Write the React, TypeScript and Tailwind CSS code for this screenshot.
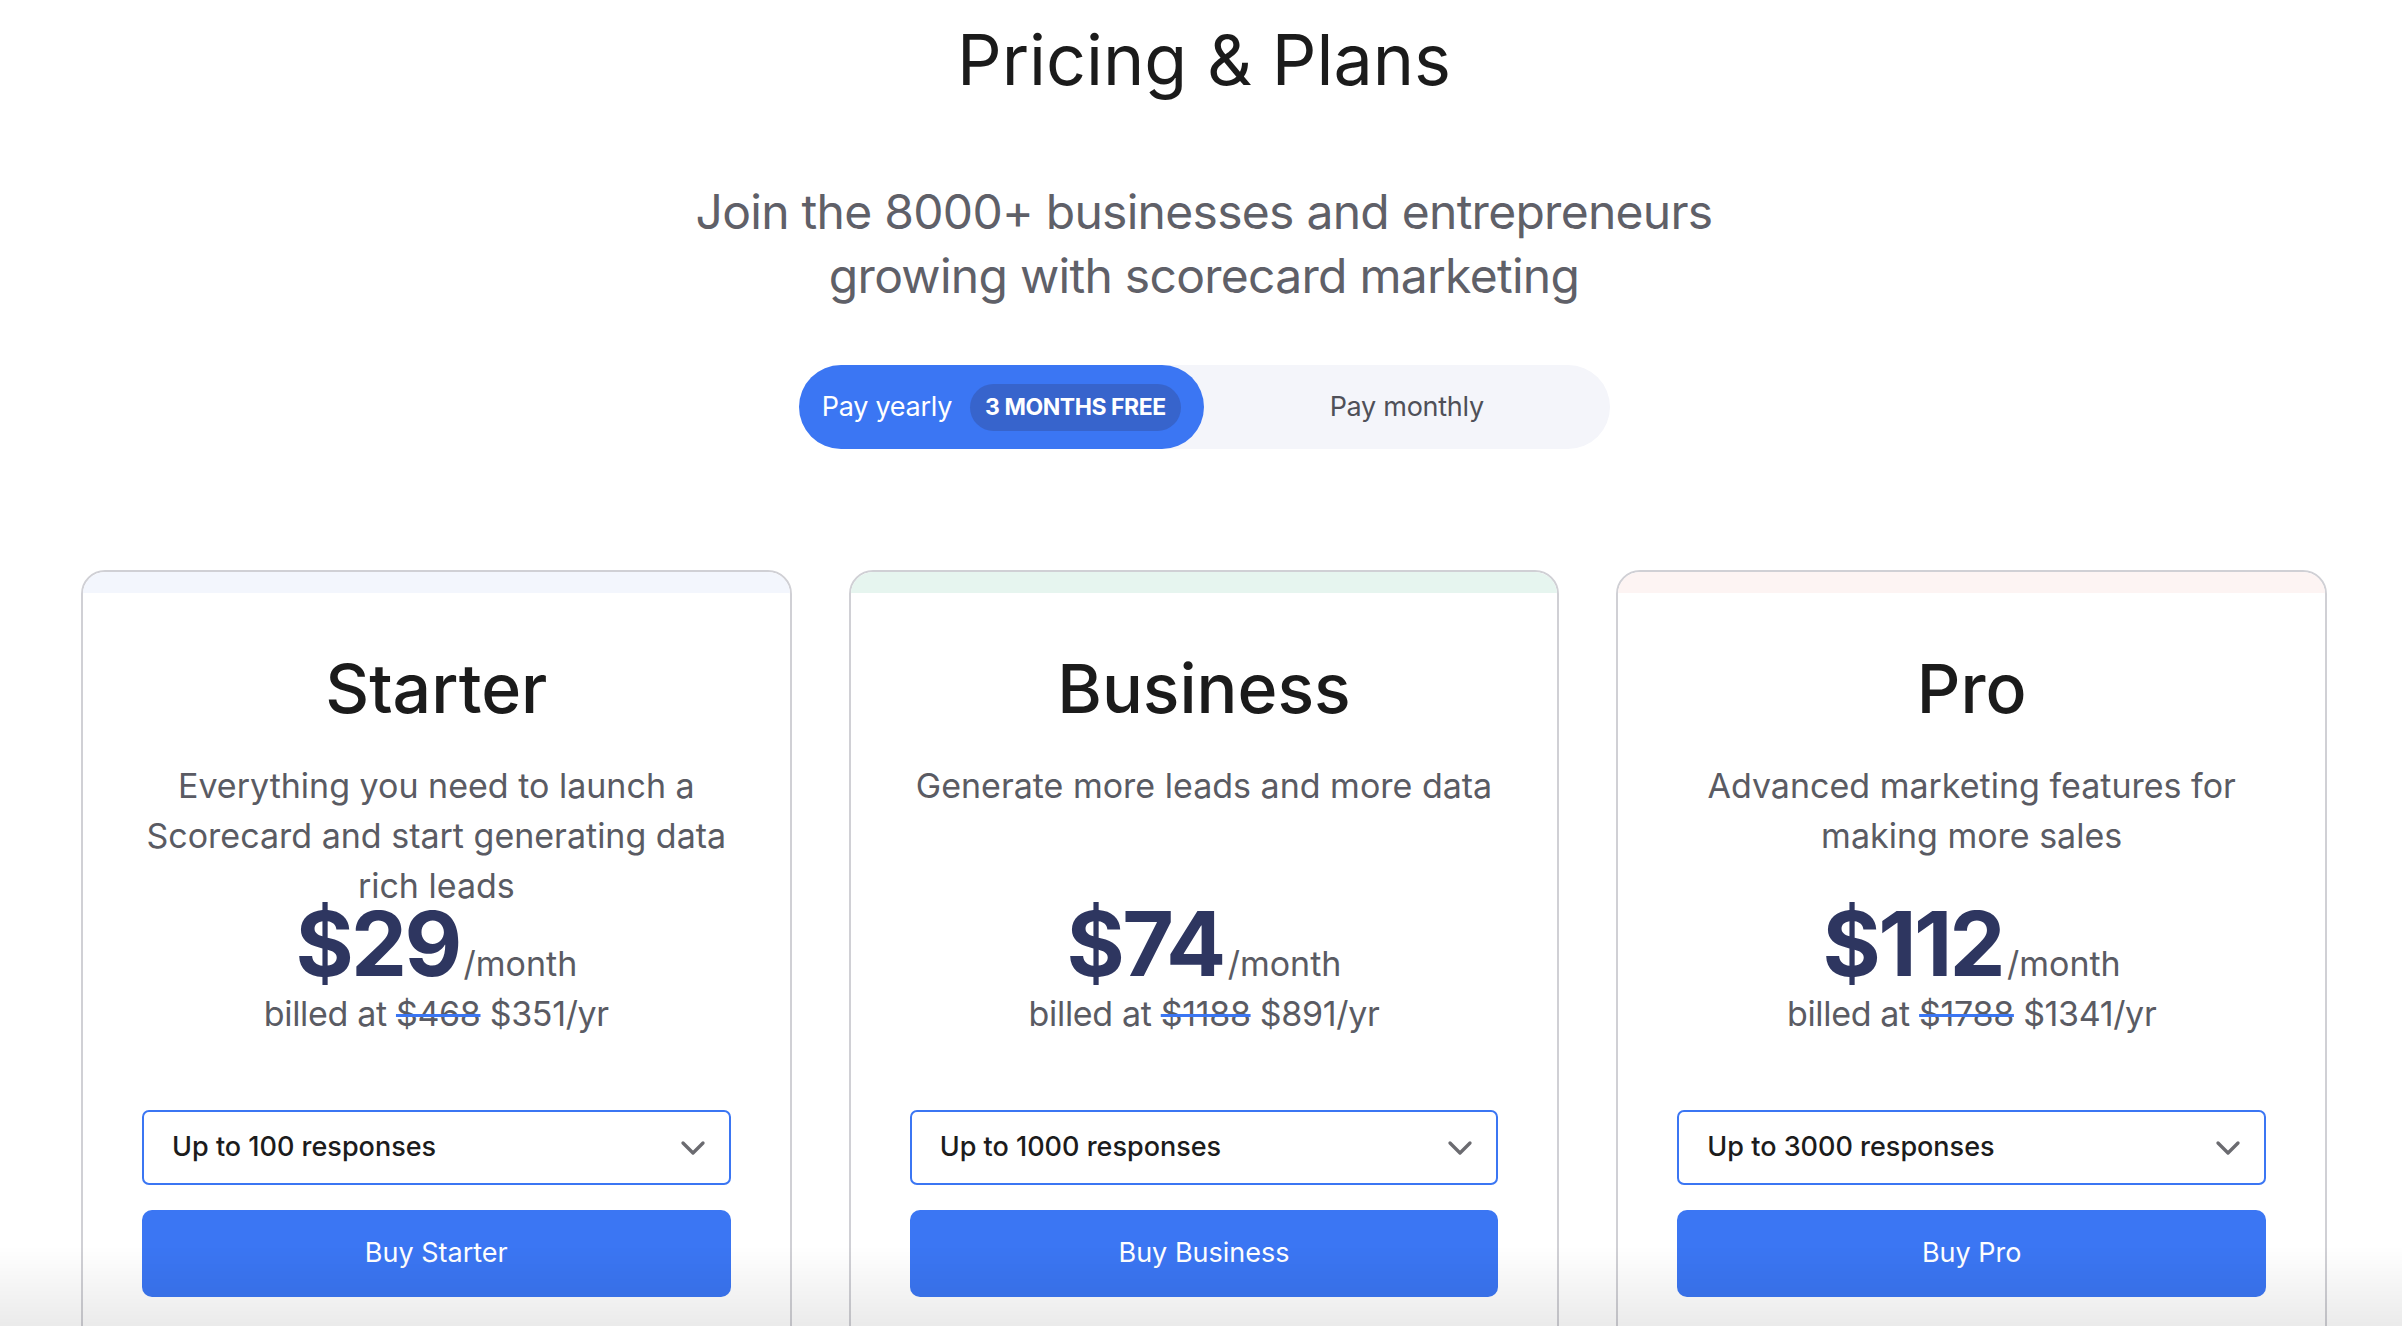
import { ChevronDown } from "lucide-react";

type Plan = {
  name: string;
  description: string;
  price: string;
  oldTotal: string;
  newTotal: string;
  responses: string;
  band: string;
};

const plans: Plan[] = [
  {
    name: "Starter",
    description: "Everything you need to launch a Scorecard and start generating data rich leads",
    price: "$29",
    oldTotal: "$468",
    newTotal: "$351/yr",
    responses: "Up to 100 responses",
    band: "bg-[#f3f6fd]",
  },
  {
    name: "Business",
    description: "Generate more leads and more data",
    price: "$74",
    oldTotal: "$1188",
    newTotal: "$891/yr",
    responses: "Up to 1000 responses",
    band: "bg-[#e6f5ef]",
  },
  {
    name: "Pro",
    description: "Advanced marketing features for making more sales",
    price: "$112",
    oldTotal: "$1788",
    newTotal: "$1341/yr",
    responses: "Up to 3000 responses",
    band: "bg-[#fdf4f3]",
  },
];

function PlanCard({ plan }: { plan: Plan }) {
  return (
    <div className="overflow-hidden rounded-[24px] border-2 border-[#d0d0d5] bg-white">
      <div className={`h-[21px] ${plan.band}`} />
      <div className="flex flex-col items-center px-[59px] pb-[120px] pt-[56px] text-center">
        <h2 className="text-[68px] font-medium leading-[79px] text-[#1b1b1b]">{plan.name}</h2>
        <p className="mt-[33px] h-[100px] text-[34px] leading-[50px] text-[#5a5b63]">
          {plan.description}
        </p>
        <div className="mt-[38px] flex items-baseline justify-center">
          <span className="text-[89px] font-bold leading-none tracking-[-0.03em] text-[#2e3660]">
            {plan.price}
          </span>
          <span className="ml-[4px] text-[34px] leading-none text-[#5a5b63]">/month</span>
        </div>
        <p className="mt-[1px] text-[34px] leading-[50px] tracking-[-0.01em] text-[#5a5b63]">
          billed at{" "}
          <span className="line-through decoration-[#3b76f3] decoration-[3px]">{plan.oldTotal}</span>{" "}
          {plan.newTotal}
        </p>
        <div className="mt-[71px] flex h-[75px] w-full items-center justify-between rounded-[7px] border-2 border-[#3b76f3] pl-[28px] pr-[16px]">
          <span className="text-[27px] font-medium text-[#1c1c1c]">{plan.responses}</span>
          <ChevronDown size={40} strokeWidth={2} className="text-[#6b6b70]" />
        </div>
        <button className="mt-[25px] flex h-[87px] w-full items-center justify-center rounded-[10px] bg-[#3b76f3] text-[27px] text-white">
          Buy {plan.name}
        </button>
      </div>
    </div>
  );
}

export default function App() {
  return (
    <div
      className="min-h-screen bg-white pl-[6px] pt-[18px]"
      style={{ fontFamily: "Inter, 'Noto Sans', sans-serif" }}
    >
      <div className="flex flex-col items-center text-center">
        <h1 className="text-[70px] leading-[83px] text-[#1b1b1b]">Pricing &amp; Plans</h1>
        <p className="mt-[79px] max-w-[1100px] text-[48px] leading-[64px] tracking-[-0.015em] text-[#5f6068]">
          Join the 8000+ businesses and entrepreneurs growing with scorecard marketing
        </p>

        <div className="mt-[57px] flex h-[84px] w-[811px] rounded-full bg-[#f4f5fa]">
          <button className="flex w-1/2 items-center justify-center gap-[18px] rounded-full bg-[#3b76f3]">
            <span className="text-[27px] tracking-[-0.01em] text-white">Pay yearly</span>
            <span className="flex h-[47px] items-center rounded-full bg-[#3764cc] px-[15px] text-[23px] font-bold tracking-[-0.02em] text-white">
              3 MONTHS FREE
            </span>
          </button>
          <button className="flex w-1/2 items-center justify-center text-[27px] tracking-[-0.01em] text-[#4f5058]">
            Pay monthly
          </button>
        </div>
      </div>

      <div className="mx-auto mt-[121px] grid w-[2246px] grid-cols-3 gap-[57px]">
        {plans.map((plan) => (
          <PlanCard key={plan.name} plan={plan} />
        ))}
      </div>

      <div className="pointer-events-none fixed inset-x-0 bottom-0 h-[80px] bg-gradient-to-b from-black/0 to-black/[0.08]" />
    </div>
  );
}
